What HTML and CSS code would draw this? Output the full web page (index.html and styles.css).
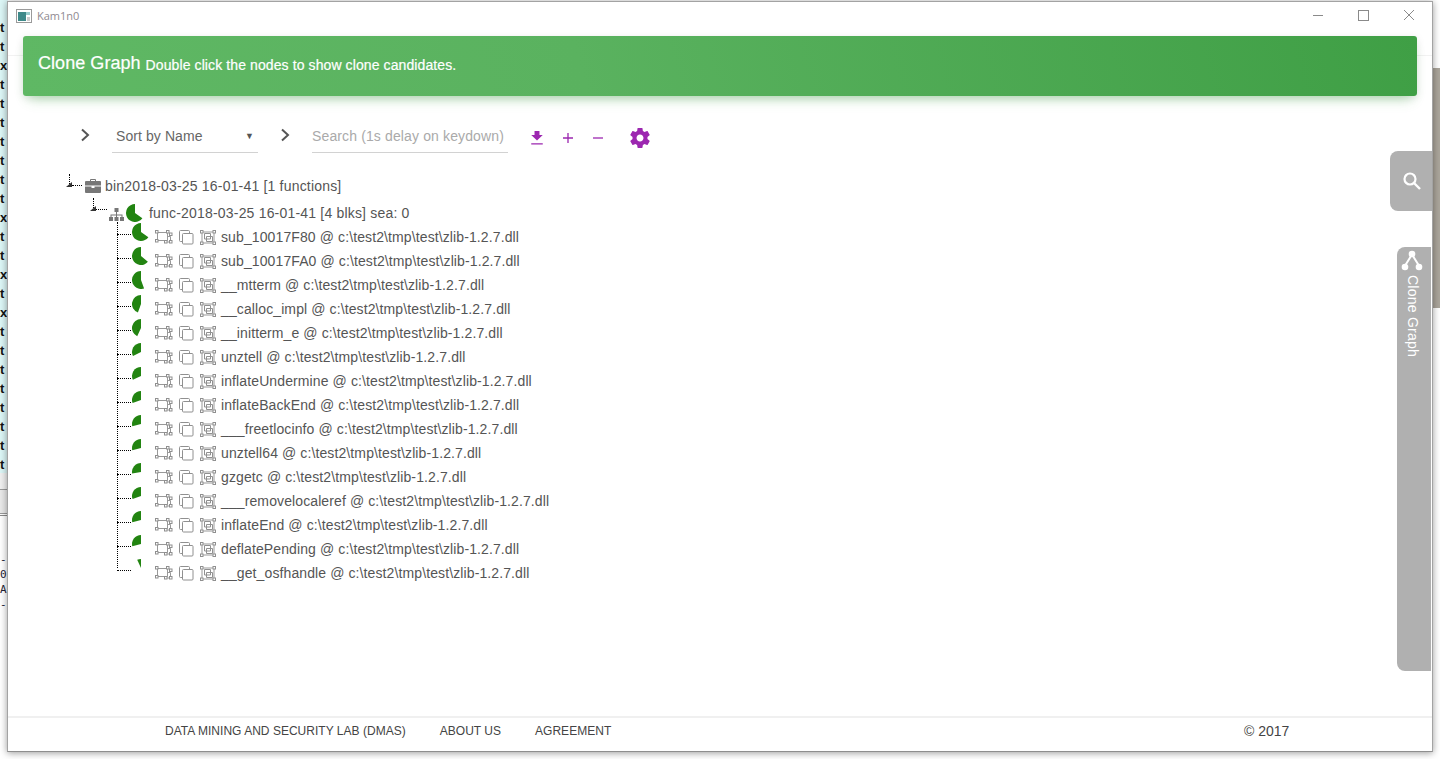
FILE: index.html
```html
<!DOCTYPE html>
<html lang="en">
<head>
<meta charset="utf-8">
<title>Kam1n0</title>
<link rel="stylesheet" href="styles.css">
</head>
<body>
<svg class="defs" width="0" height="0" aria-hidden="true">
  <symbol id="i-graph" viewBox="0 0 18 14">
    <g fill="none" stroke="#999" stroke-width="1"><path d="M2.500 2.500h10v8h-10zM12.500 6.500h3v5.500h-6v-1.500"/></g>
    <g fill="#fff" stroke="#8f8f8f" stroke-width="1"><rect x=".5" y=".5" width="2.500" height="2.500"/><rect x="11.500" y=".5" width="2.500" height="2.500"/><rect x=".5" y="9.500" width="2.500" height="2.500"/><rect x="9.500" y="10.500" width="2.500" height="2.500"/><rect x="14.500" y="3" width="2.500" height="2.500"/><rect x="14.500" y="10.500" width="2.500" height="2.500"/></g>
  </symbol>
  <symbol id="i-copy" viewBox="0 0 15 15">
    <path d="M3.500 11.500H1.500a1 1 0 0 1-1-1V1.500a1 1 0 0 1 1-1h8a1 1 0 0 1 1 1V3.500" fill="none" stroke="#909090"/>
    <rect x="3.500" y="3.500" width="10.500" height="10.500" rx="1" fill="#fff" stroke="#909090"/>
  </symbol>
  <symbol id="i-frame" viewBox="0 0 16 15">
    <path d="M2 2h12v11H2z" fill="none" stroke="#999"/>
    <path d="M4.500 3.500h6v5.500h-6zM6.500 6.500h6v5h-6z" fill="none" stroke="#909090"/>
    <g fill="#fff" stroke="#8f8f8f"><rect x=".5" y=".5" width="2.500" height="2.500"/><rect x="13" y=".5" width="2.500" height="2.500"/><rect x=".5" y="12" width="2.500" height="2.500"/><rect x="13" y="12" width="2.500" height="2.500"/></g>
  </symbol>
</svg>

<div class="desktop-left">
  <span class="code-col">t</span><span class="code-col">t</span><span class="code-col">x</span><span class="code-col">t</span><span class="code-col">t</span><span class="code-col">t</span><span class="code-col">t</span><span class="code-col">t</span><span class="code-col">t</span><span class="code-col">t</span><span class="code-col">x</span><span class="code-col">t</span><span class="code-col">t</span><span class="code-col">x</span><span class="code-col">t</span><span class="code-col">x</span><span class="code-col">t</span><span class="code-col">t</span><span class="code-col">t</span><span class="code-col">t</span><span class="code-col">t</span><span class="code-col">t</span><span class="code-col">t</span><span class="code-col">t</span>
</div>
<div class="desktop-bands"></div>
<div class="desktop-code">
  <span>-</span><span>0</span><span>A</span><span>-</span>
</div>
<div class="desktop-right"></div>

<div class="window">
  <header class="titlebar">
    <svg class="app-icon" width="16" height="14" viewBox="0 0 16 14"><rect x=".5" y=".5" width="15" height="13" fill="#fff" stroke="#9a9a9a"/><rect x="2" y="3" width="8" height="9" fill="#3f8a8a"/><rect x="10" y="3" width="4" height="3" fill="#9cc"/><rect x="11" y="8" width="3" height="4" fill="#ccc"/></svg>
    <span class="app-title">Kam1n0</span>
    <div class="win-controls">
      <svg width="12" height="12" viewBox="0 0 12 12"><path d="M0 6.500h10" stroke="#8a8a8a"/></svg>
      <svg width="12" height="12" viewBox="0 0 12 12"><rect x=".5" y="1.500" width="10" height="10" fill="none" stroke="#8a8a8a"/></svg>
      <svg width="12" height="12" viewBox="0 0 12 12"><path d="M1 1l10 10M11 1L1 11" stroke="#8a8a8a"/></svg>
    </div>
  </header>

  <main class="content">
    <div class="nav-line"></div>
    <section class="card-header">
      <span class="card-title">Clone Graph</span>
      <span class="card-sub">Double click the nodes to show clone candidates.</span>
    </section>

    <div class="toolbar">
      <svg class="chev chev-a" width="10" height="14" viewBox="0 0 10 14"><path d="M2 1.500l6 5.500-6 5.500" fill="none" stroke="#555" stroke-width="2"/></svg>
      <div class="select"><span>Sort by Name</span><span class="caret">▼</span></div>
      <svg class="chev chev-b" width="10" height="14" viewBox="0 0 10 14"><path d="M2 1.500l6 5.500-6 5.500" fill="none" stroke="#555" stroke-width="2"/></svg>
      <input class="search" type="text" placeholder="Search (1s delay on keydown)">
      <svg class="tool t-down" width="14" height="14" viewBox="5 3 14 17"><path fill="#9c27b0" d="M15 3v5h4l-7 6.500L5 8h4V3zM5 18h14v1.500H5z"/></svg>
      <svg class="tool t-plus" width="12" height="12" viewBox="0 0 12 12"><path d="M6 1v10M1 6h10" stroke="#9c27b0" stroke-width="1.300"/></svg>
      <svg class="tool t-minus" width="12" height="12" viewBox="0 0 12 12"><path d="M1 6h10" stroke="#9c27b0" stroke-width="1.300"/></svg>
      <svg class="tool t-gear" width="24" height="24" viewBox="0 0 24 24"><path fill="#9c27b0" d="M19.430 12.980c.04-.32.07-.64.07-.98s-.03-.66-.07-.98l2.110-1.650c.19-.15.24-.42.120-.64l-2-3.460c-.12-.22-.39-.3-.61-.22l-2.490 1c-.52-.4-1.080-.73-1.690-.98l-.38-2.650C14.460 2.180 14.250 2 14 2h-4c-.25 0-.46.180-.49.420l-.38 2.650c-.61.250-1.170.59-1.690.98l-2.490-1c-.23-.09-.49 0-.61.220l-2 3.460c-.13.220-.07.490.12.640l2.110 1.650c-.04.320-.07.650-.07.980s.03.660.07.980l-2.110 1.650c-.19.150-.24.420-.12.640l2 3.460c.12.220.39.300.61.220l2.490-1c.52.400 1.080.730 1.690.980l.38 2.650c.03.240.24.420.49.420h4c.25 0 .46-.18.49-.42l.38-2.650c.61-.25 1.170-.59 1.690-.98l2.490 1c.23.090.49 0 .61-.22l2-3.460c.12-.22.07-.49-.12-.64l-2.110-1.650zM12 15.500c-1.930 0-3.500-1.570-3.500-3.500s1.570-3.500 3.500-3.500 3.500 1.570 3.500 3.500-1.570 3.500-3.500 3.500z"/></svg>
    </div>

    <div class="tree">
      <div class="bin-row">
        <span class="toggle"></span>
        <svg class="bin-icon" width="16" height="14" viewBox="0 0 16 14"><path fill="#777" d="M5 2V1a1 1 0 0 1 1-1h4a1 1 0 0 1 1 1v1h4a1 1 0 0 1 1 1v3.500H0V3a1 1 0 0 1 1-1zm1 0h4V1H6zM0 7.500h6.500V9h3V7.500H16V13a1 1 0 0 1-1 1H1a1 1 0 0 1-1-1z"/></svg>
        <span class="label">bin2018-03-25 16-01-41 [1 functions]</span>
      </div>
      <div class="func-row">
        <span class="toggle"></span>
        <svg class="func-icon" width="15" height="13" viewBox="0 0 15 13"><path fill="#777" d="M5.500 0h4v4h-4zM7 4h1v2.500h5.500V9h-1V7.500H8V9H7V7.500H2.500V9h-1V6.500H7zM0 9h4v4H0zM5.500 9h4v4h-4zM11 9h4v4h-4z"/></svg>
        <svg class="pie func-pie" width="18" height="18" viewBox="0 0 18 18"><path d="M9 9V0A9 9 0 1 0 16.370 14.160z"/></svg>
        <span class="label">func-2018-03-25 16-01-41 [4 blks] sea: 0</span>
      </div>
      <div class="blocks">
        <div class="row"><svg class="pie" width="18" height="18" viewBox="0 0 18 18"><path d="M9 9V0A9 9 0 1 0 16.370 14.160z"/></svg><svg class="ic-graph"><use href="#i-graph"/></svg><svg class="ic-copy"><use href="#i-copy"/></svg><svg class="ic-frame"><use href="#i-frame"/></svg><span class="label">sub_10017F80 @ c:\test2\tmp\test\zlib-1.2.7.dll</span></div>
        <div class="row"><svg class="pie" width="18" height="18" viewBox="0 0 18 18"><path d="M9 9V0A9 9 0 1 0 15.890 14.790z"/></svg><svg class="ic-graph"><use href="#i-graph"/></svg><svg class="ic-copy"><use href="#i-copy"/></svg><svg class="ic-frame"><use href="#i-frame"/></svg><span class="label">sub_10017FA0 @ c:\test2\tmp\test\zlib-1.2.7.dll</span></div>
        <div class="row"><svg class="pie" width="18" height="18" viewBox="0 0 18 18"><path d="M9 9V0A9 9 0 1 0 12.080 17.460z"/></svg><svg class="ic-graph"><use href="#i-graph"/></svg><svg class="ic-copy"><use href="#i-copy"/></svg><svg class="ic-frame"><use href="#i-frame"/></svg><span class="label">__mtterm @ c:\test2\tmp\test\zlib-1.2.7.dll</span></div>
        <div class="row"><svg class="pie" width="18" height="18" viewBox="0 0 18 18"><path d="M9 9V0A9 9 0 0 0 5.920 17.460z"/></svg><svg class="ic-graph"><use href="#i-graph"/></svg><svg class="ic-copy"><use href="#i-copy"/></svg><svg class="ic-frame"><use href="#i-frame"/></svg><span class="label">__calloc_impl @ c:\test2\tmp\test\zlib-1.2.7.dll</span></div>
        <div class="row"><svg class="pie" width="18" height="18" viewBox="0 0 18 18"><path d="M9 9V0A9 9 0 0 0 5.200 17.160z"/></svg><svg class="ic-graph"><use href="#i-graph"/></svg><svg class="ic-copy"><use href="#i-copy"/></svg><svg class="ic-frame"><use href="#i-frame"/></svg><span class="label">__initterm_e @ c:\test2\tmp\test\zlib-1.2.7.dll</span></div>
        <div class="row"><svg class="pie" width="18" height="18" viewBox="0 0 18 18"><path d="M9 9V0A9 9 0 0 0 .98 13.090z"/></svg><svg class="ic-graph"><use href="#i-graph"/></svg><svg class="ic-copy"><use href="#i-copy"/></svg><svg class="ic-frame"><use href="#i-frame"/></svg><span class="label">unztell @ c:\test2\tmp\test\zlib-1.2.7.dll</span></div>
        <div class="row"><svg class="pie" width="18" height="18" viewBox="0 0 18 18"><path d="M9 9V0A9 9 0 0 0 .85 12.800z"/></svg><svg class="ic-graph"><use href="#i-graph"/></svg><svg class="ic-copy"><use href="#i-copy"/></svg><svg class="ic-frame"><use href="#i-frame"/></svg><span class="label">inflateUndermine @ c:\test2\tmp\test\zlib-1.2.7.dll</span></div>
        <div class="row"><svg class="pie" width="18" height="18" viewBox="0 0 18 18"><path d="M9 9V0A9 9 0 0 0 .54 12.080z"/></svg><svg class="ic-graph"><use href="#i-graph"/></svg><svg class="ic-copy"><use href="#i-copy"/></svg><svg class="ic-frame"><use href="#i-frame"/></svg><span class="label">inflateBackEnd @ c:\test2\tmp\test\zlib-1.2.7.dll</span></div>
        <div class="row"><svg class="pie" width="18" height="18" viewBox="0 0 18 18"><path d="M9 9V0A9 9 0 0 0 .31 11.330z"/></svg><svg class="ic-graph"><use href="#i-graph"/></svg><svg class="ic-copy"><use href="#i-copy"/></svg><svg class="ic-frame"><use href="#i-frame"/></svg><span class="label">___freetlocinfo @ c:\test2\tmp\test\zlib-1.2.7.dll</span></div>
        <div class="row"><svg class="pie" width="18" height="18" viewBox="0 0 18 18"><path d="M9 9V0A9 9 0 0 0 .31 11.330z"/></svg><svg class="ic-graph"><use href="#i-graph"/></svg><svg class="ic-copy"><use href="#i-copy"/></svg><svg class="ic-frame"><use href="#i-frame"/></svg><span class="label">unztell64 @ c:\test2\tmp\test\zlib-1.2.7.dll</span></div>
        <div class="row"><svg class="pie" width="18" height="18" viewBox="0 0 18 18"><path d="M9 9V0A9 9 0 0 0 .14 10.560z"/></svg><svg class="ic-graph"><use href="#i-graph"/></svg><svg class="ic-copy"><use href="#i-copy"/></svg><svg class="ic-frame"><use href="#i-frame"/></svg><span class="label">gzgetc @ c:\test2\tmp\test\zlib-1.2.7.dll</span></div>
        <div class="row"><svg class="pie" width="18" height="18" viewBox="0 0 18 18"><path d="M9 9V0A9 9 0 0 0 .54 12.080z"/></svg><svg class="ic-graph"><use href="#i-graph"/></svg><svg class="ic-copy"><use href="#i-copy"/></svg><svg class="ic-frame"><use href="#i-frame"/></svg><span class="label">___removelocaleref @ c:\test2\tmp\test\zlib-1.2.7.dll</span></div>
        <div class="row"><svg class="pie" width="18" height="18" viewBox="0 0 18 18"><path d="M9 9V0A9 9 0 0 0 .31 11.330z"/></svg><svg class="ic-graph"><use href="#i-graph"/></svg><svg class="ic-copy"><use href="#i-copy"/></svg><svg class="ic-frame"><use href="#i-frame"/></svg><span class="label">inflateEnd @ c:\test2\tmp\test\zlib-1.2.7.dll</span></div>
        <div class="row"><svg class="pie" width="18" height="18" viewBox="0 0 18 18"><path d="M9 9V0A9 9 0 0 0 .31 11.330z"/></svg><svg class="ic-graph"><use href="#i-graph"/></svg><svg class="ic-copy"><use href="#i-copy"/></svg><svg class="ic-frame"><use href="#i-frame"/></svg><span class="label">deflatePending @ c:\test2\tmp\test\zlib-1.2.7.dll</span></div>
        <div class="row"><svg class="pie" width="18" height="18" viewBox="0 0 18 18"><path d="M9 9V0A9 9 0 0 0 5.200 .85z"/></svg><svg class="ic-graph"><use href="#i-graph"/></svg><svg class="ic-copy"><use href="#i-copy"/></svg><svg class="ic-frame"><use href="#i-frame"/></svg><span class="label">__get_osfhandle @ c:\test2\tmp\test\zlib-1.2.7.dll</span></div>
      </div>
    </div>

    <button class="tab-search" type="button" aria-label="Search">
      <svg width="20" height="20" viewBox="0 0 20 20"><circle cx="8" cy="8" r="5.500" fill="none" stroke="#fff" stroke-width="2.200"/><path d="M12 12l6 6" stroke="#fff" stroke-width="2.400"/></svg>
    </button>
    <div class="tab-clone">
      <svg class="tab-icon" width="24" height="24" viewBox="0 0 24 24"><path d="M12 4.500L4.500 16.500M12 4.500l7.500 12" stroke="#fff" stroke-width="2" fill="none"/><circle cx="12" cy="4" r="3.300" fill="#fff"/><circle cx="5" cy="17" r="3.300" fill="#fff"/><circle cx="19" cy="17" r="3.300" fill="#fff"/></svg>
      <span class="tab-label">Clone Graph</span>
    </div>
  </main>

  <footer class="footer">
    <nav class="foot-links">
      <span>DATA MINING AND SECURITY LAB (DMAS)</span>
      <span>ABOUT US</span>
      <span>AGREEMENT</span>
    </nav>
    <span class="copyright">© 2017</span>
  </footer>
</div>
</body>
</html>
```

FILE: styles.css
```css
* { box-sizing: border-box; }
html, body { margin: 0; height: 100%; }
body {
  position: relative;
  width: 1440px;
  height: 759px;
  overflow: hidden;
  background: #fff;
  font-family: "Liberation Sans", Arial, sans-serif;
  color: #555;
}
.defs { position: absolute; }

/* the desktop behind the window */
.desktop-left {
  position: absolute; left: 0; top: 0; width: 8px; height: 473px;
  background: #dcf6f6;
  padding-top: 18px;
  display: flex; flex-direction: column;
}
.code-col {
  height: 19px;
  font: 700 13px/19px "Liberation Sans", sans-serif;
  color: #111;
}
.desktop-bands {
  position: absolute; left: 0; top: 473px; width: 8px; height: 46px;
  background: linear-gradient(#f0f0f0 0 16px, #9a9a9a 16px 17px, #e9e9e9 17px 40px, #9a9a9a 40px 41px, #fff 41px 42px, #8a8a8a 42px 43px, #fff 43px);
}
.desktop-code {
  position: absolute; left: 0; top: 552px; width: 8px;
  display: flex; flex-direction: column;
  font: 11px/15px "DejaVu Sans Mono", monospace; color: #223;
}
.desktop-code span { height: 15px; }
.desktop-right {
  position: absolute; left: 1433px; top: 68px; width: 7px; height: 240px;
  background: #aba59b;
}

/* window */
.window {
  position: absolute; left: 7px; top: 1px; width: 1426px; height: 751px;
  display: flex; flex-direction: column;
  background: #fff;
  border: 1px solid #a3a3a3;
  border-bottom-color: #8e8e8e;
  box-shadow: 0 1px 7px rgba(0, 0, 0, .4);
}
.titlebar {
  height: 28px; flex: none;
  display: flex; align-items: center;
  padding-left: 8px;
}
.app-icon { margin-top: -1px; }
.app-title {
  margin-left: 5px; margin-top: -2px;
  font: 11px "Open Sans", sans-serif;
  color: #8f8a90;
}
.win-controls {
  margin-left: auto;
  display: flex; gap: 33px;
  padding-right: 17px;
  margin-top: -2px;
}
.content {
  position: relative;
  flex: 1; min-height: 0;
  display: flex; flex-direction: column;
}
.nav-line {
  position: absolute; left: 0; right: 0; top: 25px;
  border-top: 1px solid #f2f2f2;
}

.card-header {
  position: relative;
  height: 60px; flex: none;
  margin: 6px 15px 0;
  padding-left: 15px;
  padding-bottom: 2px;
  display: flex; align-items: center; gap: 5px;
  border-radius: 3px;
  background: linear-gradient(75deg, #5fb864 0%, #5ab25f 40%, #3f9f45 100%);
  box-shadow: 0 8px 12px -6px rgba(76, 175, 80, .45), 0 2px 8px rgba(0, 0, 0, .1);
  color: #fff;
}
.card-title { font-size: 18px; letter-spacing: .05px; margin-top: -4px; -webkit-text-stroke: .2px #fff; }
.card-sub { font-size: 14px; letter-spacing: .1px; -webkit-text-stroke: .2px #fff; }

.toolbar {
  flex: none;
  height: 31px;
  margin-top: 26px;
  padding-left: 72px;
  display: flex; align-items: center;
}
.chev { margin-top: -6px; flex: none; }
.select {
  margin-left: 22px;
  width: 146px; height: 31px;
  display: flex; align-items: center; justify-content: space-between;
  padding: 0 4px 2px;
  border-bottom: 1px solid #d2d2d2;
  font-size: 14px; color: #666;
}
.select span:first-child { letter-spacing: .08px; }
.caret { font-size: 9px; color: #555; }
.chev-b { margin-left: 22px; }
.search {
  margin-left: 22px;
  width: 196px; height: 31px;
  border: 0; border-bottom: 1px solid #d2d2d2;
  outline: 0; padding: 0 0 2px;
  background: none;
  font: 14px "Liberation Sans", Arial, sans-serif;
  letter-spacing: .13px;
}
.search::placeholder { color: #aaa; opacity: 1; }
.tool { flex: none; }
.t-down { margin-left: 22px; }
.t-plus { margin-left: 18px; }
.t-minus { margin-left: 18px; }
.t-gear { margin-left: 24px; }

/* tree */
.tree {
  margin-top: 21px;
  font-size: 14px;
  letter-spacing: .11px;
  color: #555;
}
.bin-row, .func-row, .row { display: flex; align-items: center; position: relative; }
.label { white-space: nowrap; }
.bin-row { height: 24px; padding-left: 77px; letter-spacing: .19px; }
.bin-icon { flex: none; margin-right: 4px; }
.func-row { height: 24px; margin-top: 3px; padding-left: 101px; letter-spacing: .19px; }
.func-icon { flex: none; margin-top: 2px; margin-right: 2px; }
.func-pie { margin-right: 5px; }
.toggle {
  position: absolute; top: 0; width: 6px; height: 6px;
}
.bin-row .toggle { left: 58px; top: 8px; }
.func-row .toggle { left: 82px; top: 5px; }
.toggle::before {
  content: ""; position: absolute; left: 3px; top: -8px; height: 10px;
  border-left: 1px dotted #000;
}
.toggle::after {
  content: ""; position: absolute; left: 0; top: 0;
  width: 0; height: 0;
  border-style: solid; border-width: 0 0 5px 6px;
  border-color: transparent transparent #333 transparent;
}
.bin-row::after, .func-row::after {
  content: ""; position: absolute; height: 0; border-top: 1px dotted #000;
}
.bin-row::after { left: 64px; width: 10px; top: 11px; }
.func-row::after { left: 88px; width: 11px; top: 8px; }

.blocks {
  position: relative;
  padding-left: 124px;
}
.blocks::before {
  content: ""; position: absolute; left: 109px; top: -3px; height: 346px;
  border-left: 1px dotted #000;
}
.row { height: 24px; }
.row::before {
  content: ""; position: absolute; left: -15px; width: 14px; top: 9px;
  border-top: 1px dotted #000;
}
.pie { flex: none; fill: #228411; }
.row .pie { align-self: flex-start; margin-top: -2px; margin-right: 5px; }
.ic-graph { flex: none; width: 18px; height: 14px; margin-right: 6px; }
.ic-copy { flex: none; width: 15px; height: 15px; margin-right: 6px; }
.ic-frame { flex: none; width: 16px; height: 15px; margin-right: 5px; }

/* side tabs */
.tab-search {
  position: absolute; right: 0; top: 121px;
  width: 42px; height: 60px;
  border: 0; padding: 0;
  display: flex; align-items: center; justify-content: center;
  padding-left: 1px;
  border-radius: 8px 0 0 8px;
  background: #b0b0b0;
}
.tab-clone {
  position: absolute; right: 1px; top: 217px;
  width: 34px; height: 424px;
  display: flex; flex-direction: column; align-items: center;
  padding: 3px 2px 0 0;
  border-radius: 8px 0 0 8px;
  background: #b0b0b0;
  color: #fff;
}
.tab-icon { margin-right: 2px; }
.tab-label {
  writing-mode: vertical-rl;
  font-size: 14px;
  letter-spacing: .25px;
  margin-top: 1px;
}

/* footer */
.footer {
  flex: none;
  height: 35px;
  display: flex; align-items: center;
  border-top: 2px solid #f0f0f0;
  padding: 0 0 7px 157px;
  font-size: 12px;
  color: #444;
}
.foot-links { display: flex; gap: 34px; letter-spacing: .02px; }
.copyright { position: absolute; left: 1236px; font-size: 14px; }
```
